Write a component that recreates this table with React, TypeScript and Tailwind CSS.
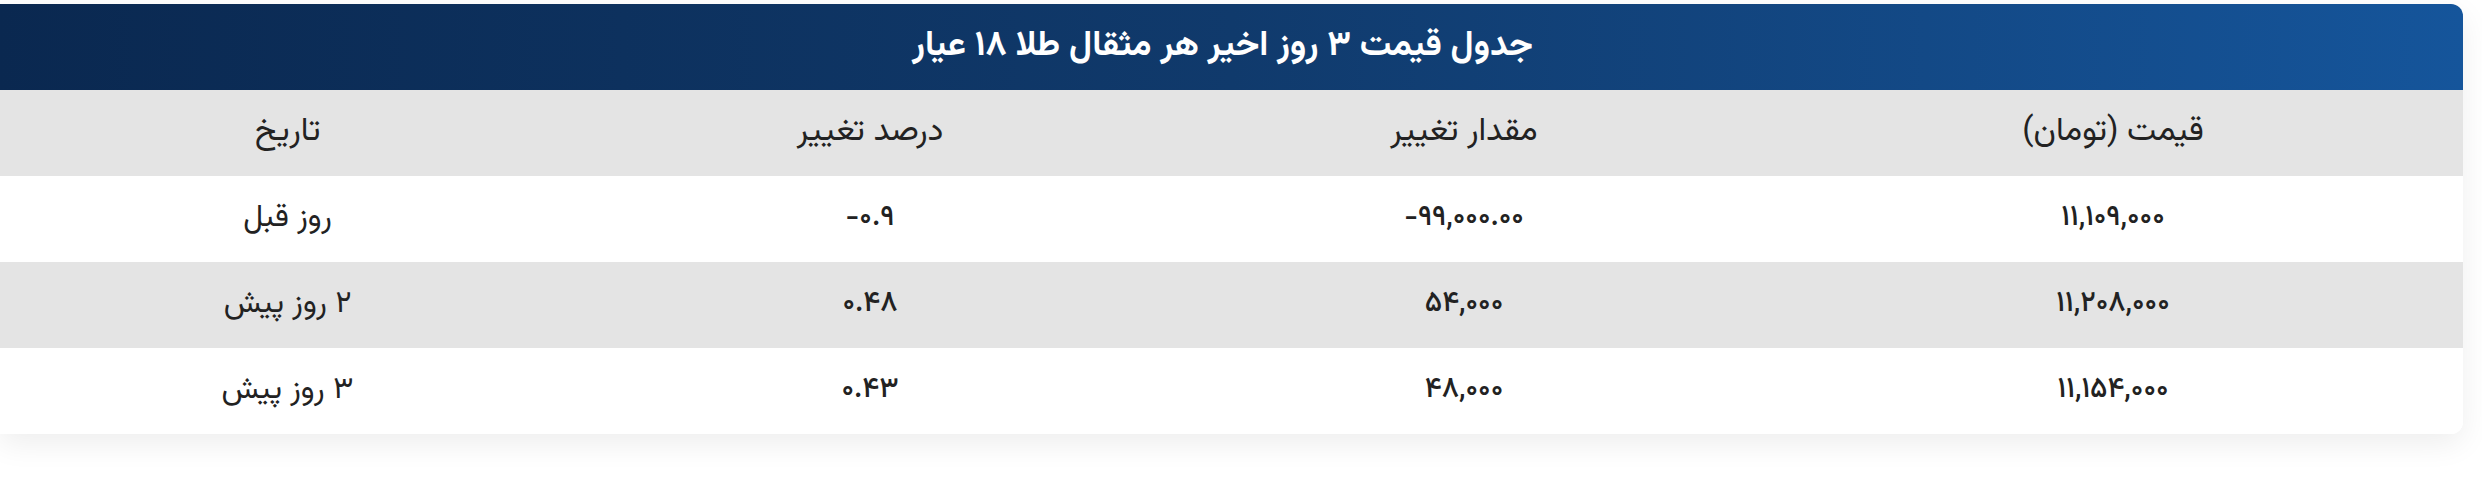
import React from "react";

const font = { fontFamily: '"Vazirmatn", "Noto Sans Arabic", "DejaVu Sans", sans-serif' };

type Row = { price: string; change: string; percent: string; date: string };

const rows: Row[] = [
  { price: "۱۱,۱۰۹,۰۰۰", change: "-۹۹,۰۰۰.۰۰", percent: "-۰.۹", date: "روز قبل" },
  { price: "۱۱,۲۰۸,۰۰۰", change: "۵۴,۰۰۰", percent: "۰.۴۸", date: "۲ روز پیش" },
  { price: "۱۱,۱۵۴,۰۰۰", change: "۴۸,۰۰۰", percent: "۰.۴۳", date: "۳ روز پیش" },
];

function Cell({ children, ltr, head }: { children: React.ReactNode; ltr?: boolean; head?: boolean }) {
  return (
    <div
      className={
        "flex items-center justify-center h-[86px] text-[#222222] " +
        (head ? "text-[33px]" : ltr ? "text-[29px] font-medium" : "text-[31px]")
      }
    >
      {ltr ? <span dir="ltr">{children}</span> : children}
    </div>
  );
}

export default function App() {
  return (
    <div dir="rtl" className="w-full h-[504px] bg-white pt-[4px] pr-[19px]" style={font}>
      <div className="bg-white rounded-tr-[12px] rounded-br-[12px] overflow-hidden shadow-[0_10px_30px_rgba(0,0,0,0.07)]">
        <div className="h-[86px] flex items-center justify-center bg-gradient-to-r from-[#0a2850] via-[#103a6c] to-[#15559b]">
          <h2 className="text-white font-bold text-[35px] mr-[18px]">جدول قیمت ۳ روز اخیر هر مثقال طلا ۱۸ عیار</h2>
        </div>
        <div className="grid grid-cols-[700px_598px_590px_1fr] bg-[#e4e4e4]">
          <Cell head>قیمت (تومان)</Cell>
          <Cell head>مقدار تغییر</Cell>
          <Cell head>درصد تغییر</Cell>
          <Cell head>تاریخ</Cell>
        </div>
        {rows.map((r, i) => (
          <div
            key={i}
            className={
              "grid grid-cols-[700px_598px_590px_1fr] " + (i % 2 === 1 ? "bg-[#e4e4e4]" : "bg-white")
            }
          >
            <Cell ltr>{r.price}</Cell>
            <Cell ltr>{r.change}</Cell>
            <Cell ltr>{r.percent}</Cell>
            <Cell>{r.date}</Cell>
          </div>
        ))}
      </div>
    </div>
  );
}
